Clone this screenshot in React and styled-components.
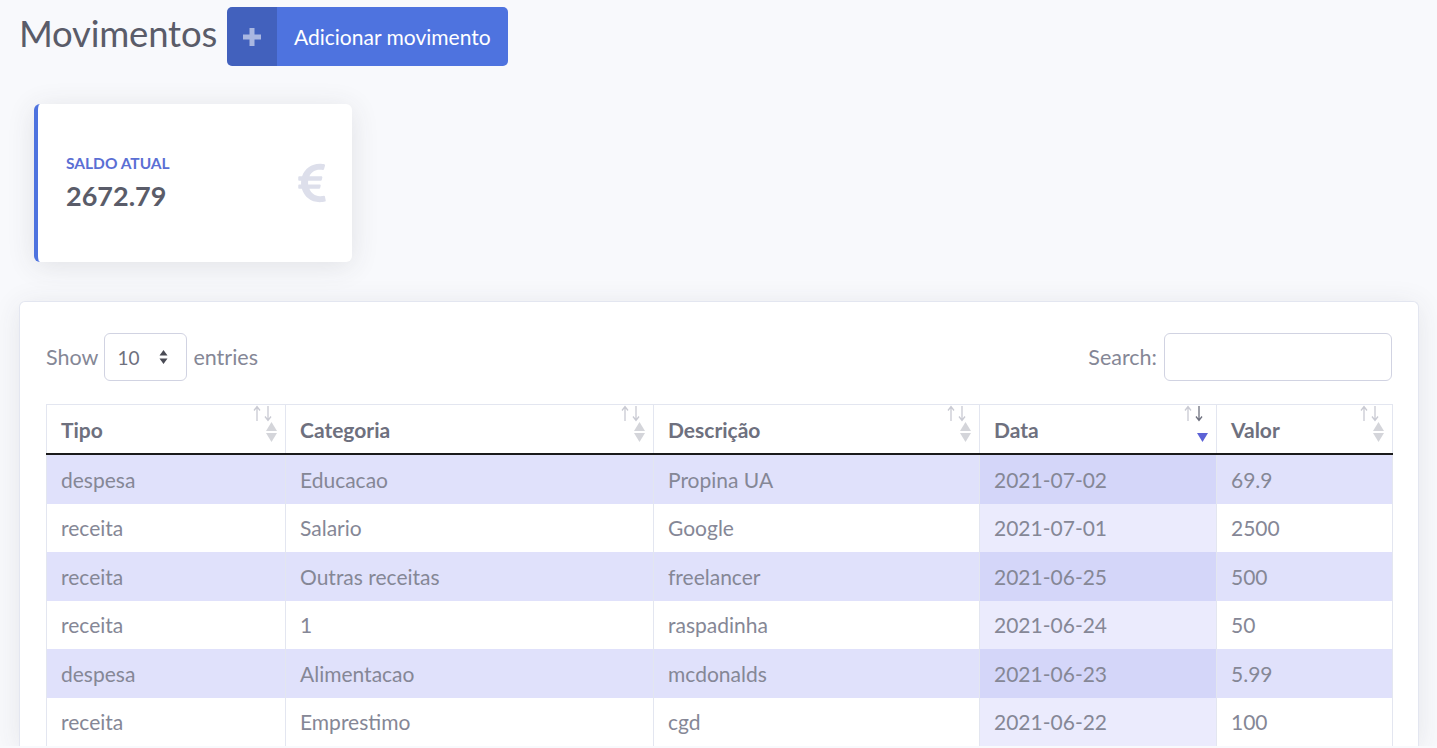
import styled, { createGlobalStyle } from 'styled-components'
import { FaEuroSign } from 'react-icons/fa'

const GlobalStyle = createGlobalStyle`
  body {
    margin: 0;
    background: #f8f9fc;
    font-family: Lato, "Open Sans", sans-serif;
    color: #858796;
  }
`

const Page = styled.div`
  padding: 7px 18px 0 19px;
`

const TopBar = styled.div`
  display: flex;
  align-items: center;
  gap: 10px;
`

const Title = styled.h1`
  margin: 0 0 7px 0;
  font-size: 36.5px;
  font-weight: 400;
  color: #5a5c69;
  letter-spacing: -0.2px;
`

const AddButton = styled.button`
  display: flex;
  align-items: stretch;
  height: 59px;
  padding: 0;
  border: none;
  border-radius: 5px;
  overflow: hidden;
  background: #4e73df;
  color: #fff;
  font-family: inherit;
  cursor: pointer;
`

const ButtonIcon = styled.span`
  width: 50px;
  display: flex;
  align-items: center;
  justify-content: center;
  background: rgba(0, 0, 0, 0.15);
`

const ButtonText = styled.span`
  display: flex;
  align-items: center;
  padding: 0 17px;
  font-size: 21px;
`

const BalanceCard = styled.div`
  margin: 38px 0 0 15px;
  width: 318px;
  height: 158px;
  box-sizing: border-box;
  background: #fff;
  border-left: 4px solid #4e73df;
  border-radius: 6px;
  box-shadow: 0 4px 28px 0 rgba(58, 59, 69, 0.12);
  display: flex;
  align-items: center;
  justify-content: space-between;
  padding: 0 18px 0 28px;
`

const BalanceLabel = styled.div`
  font-size: 15.5px;
  font-weight: 700;
  color: #5b6fd4;
  text-transform: uppercase;
`

const BalanceValue = styled.div`
  margin-top: 7px;
  font-size: 27px;
  font-weight: 700;
  color: #5a5c69;
`

const TableCard = styled.div`
  margin-top: 39px;
  background: #fff;
  border: 1px solid #e3e6f0;
  border-bottom: none;
  border-radius: 6px 6px 0 0;
  box-shadow: 0 4px 28px 0 rgba(58, 59, 69, 0.1);
  padding: 31px 26px 0 26px;
`

const Controls = styled.div`
  display: flex;
  justify-content: space-between;
  align-items: center;
  height: 48px;
  font-size: 21.5px;
  color: #858796;
`

const ControlGroup = styled.label`
  display: flex;
  align-items: center;
  gap: 6px;
`

const SelectBox = styled.div`
  width: 83px;
  height: 48px;
  box-sizing: border-box;
  border: 1px solid #d1d3e2;
  border-radius: 6px;
  display: flex;
  align-items: center;
  padding: 0 18px 0 0;
  background: #fff;
`

const Select = styled.select`
  appearance: none;
  border: none;
  background: transparent;
  flex: 1;
  height: 100%;
  padding-left: 12px;
  font-family: inherit;
  font-size: 19px;
  color: #6e707e;
  outline: none;
`

const SearchInput = styled.input`
  width: 228px;
  height: 48px;
  box-sizing: border-box;
  border: 1px solid #d1d3e2;
  border-radius: 6px;
  margin-left: 1px;
  font-family: inherit;
  font-size: 19px;
  outline: none;
`

const Table = styled.table`
  margin-top: 23px;
  width: 100%;
  border-collapse: collapse;
  table-layout: fixed;
  font-size: 21px;
`

const HeadCell = styled.th`
  position: relative;
  height: 48px;
  padding: 0 14px;
  text-align: left;
  font-weight: 700;
  color: #6e707e;
  border: 1px solid #e3e6f0;
  border-bottom: 2px solid #1a1a1a;
`

const SortIcon = styled.svg`
  position: absolute;
  right: 0;
  top: 0;
`

const Row = styled.tr`
  background: ${(p) => (p.$striped ? '#e0e1fb' : '#fff')};
`

const Cell = styled.td`
  height: 48.5px;
  padding: 0 14px;
  color: #858796;
  border-left: 1px solid #e3e6f0;
  border-right: 1px solid #e3e6f0;
  background: ${(p) =>
    p.$sorted ? (p.$striped ? '#d4d6f9' : '#ebebfd') : 'transparent'};
`

const columns = [
  { title: 'Tipo', width: 239 },
  { title: 'Categoria', width: 368 },
  { title: 'Descrição', width: 326 },
  { title: 'Data', width: 237, sorted: true },
  { title: 'Valor', width: 176 },
]

const rows = [
  ['despesa', 'Educacao', 'Propina UA', '2021-07-02', '69.9'],
  ['receita', 'Salario', 'Google', '2021-07-01', '2500'],
  ['receita', 'Outras receitas', 'freelancer', '2021-06-25', '500'],
  ['receita', '1', 'raspadinha', '2021-06-24', '50'],
  ['despesa', 'Alimentacao', 'mcdonalds', '2021-06-23', '5.99'],
  ['receita', 'Emprestimo', 'cgd', '2021-06-22', '100'],
]

// flechas de ordenação no canto do cabeçalho
const SortArrows = ({ active }) => (
  <SortIcon width="32" height="40" viewBox="0 0 32 40">
    <g stroke="#c9cad3" strokeWidth="1.3" fill="none">
      <path d="M4 16V2M1 5.5L4 1.5L7 5.5" />
    </g>
    <g stroke={active ? '#6e707e' : '#c9cad3'} strokeWidth="1.3" fill="none">
      <path d="M15 1V15M12 11.5L15 15.5L18 11.5" />
    </g>
    {!active && <path d="M18.5 17L24 26H13Z" fill="#d4d5da" />}
    <path d="M13 28H24L18.5 37Z" fill={active ? '#5c62d6' : '#d4d5da'} />
  </SortIcon>
)

const App = () => {
  return (
    <Page>
      <GlobalStyle />
      <TopBar>
        <Title>Movimentos</Title>
        <AddButton>
          <ButtonIcon>
            <svg width="20" height="20" viewBox="0 0 20 20">
              <path d="M10 1V19M1 10H19" stroke="rgba(255,255,255,0.55)" strokeWidth="5" />
            </svg>
          </ButtonIcon>
          <ButtonText>Adicionar movimento</ButtonText>
        </AddButton>
      </TopBar>

      <BalanceCard>
        <div>
          <BalanceLabel>Saldo atual</BalanceLabel>
          <BalanceValue>2672.79</BalanceValue>
        </div>
        <FaEuroSign size={44} color="#dddfeb" />
      </BalanceCard>

      <TableCard>
        <Controls>
          <ControlGroup>
            Show
            <SelectBox>
              <Select defaultValue="10">
                <option>10</option>
                <option>25</option>
                <option>50</option>
              </Select>
              <svg width="9" height="16" viewBox="0 0 9 16">
                <path d="M4.5 1L8.5 6.5H0.5Z M0.5 9.5H8.5L4.5 15Z" fill="#4a4b55" />
              </svg>
            </SelectBox>
            entries
          </ControlGroup>
          <ControlGroup>
            Search:
            <SearchInput type="search" />
          </ControlGroup>
        </Controls>

        <Table>
          <colgroup>
            {columns.map((c) => (
              <col key={c.title} style={{ width: c.width }} />
            ))}
          </colgroup>
          <thead>
            <tr>
              {columns.map((c) => (
                <HeadCell key={c.title}>
                  {c.title}
                  <SortArrows active={c.sorted} />
                </HeadCell>
              ))}
            </tr>
          </thead>
          <tbody>
            {rows.map((r, i) => (
              <Row key={i} $striped={i % 2 === 0}>
                {r.map((v, j) => (
                  <Cell key={j} $sorted={columns[j].sorted} $striped={i % 2 === 0}>
                    {v}
                  </Cell>
                ))}
              </Row>
            ))}
          </tbody>
        </Table>
      </TableCard>
    </Page>
  )
}

export default App
